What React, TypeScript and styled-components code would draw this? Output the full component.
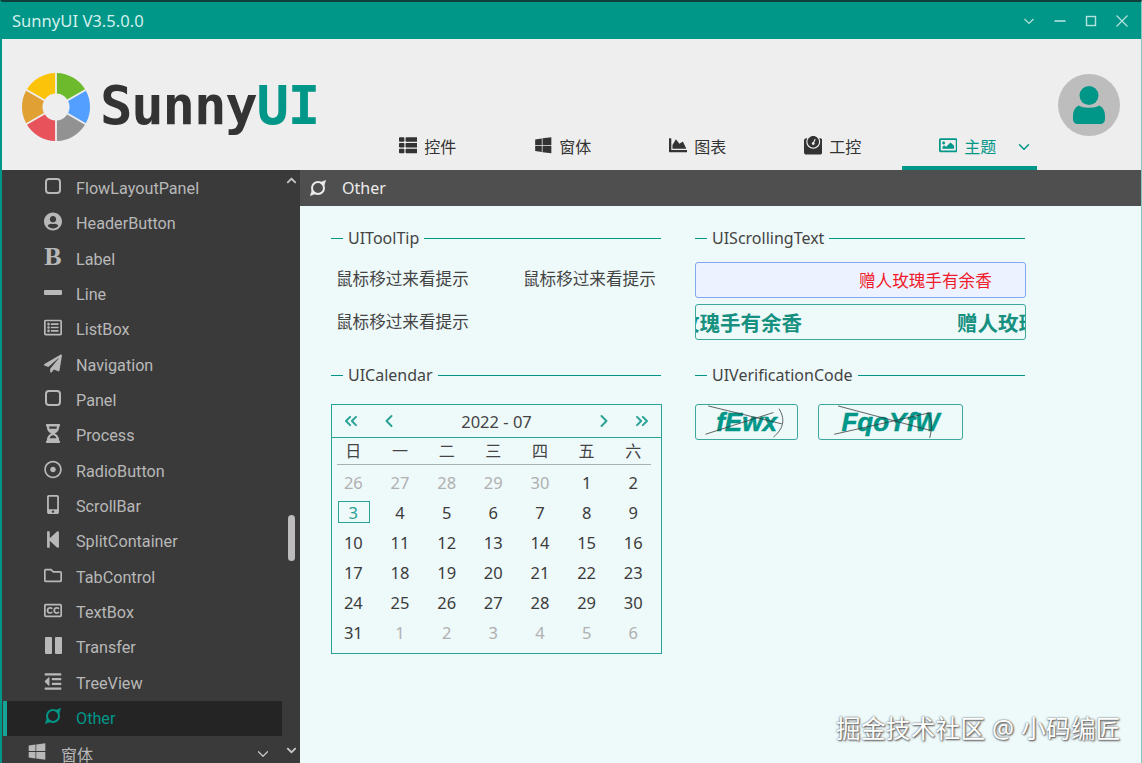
import React from 'react';
import styled, { createGlobalStyle } from 'styled-components';
import {
  FaUserCircle, FaRegListAlt, FaPaperPlane, FaHourglassHalf, FaRegDotCircle,
  FaMobileAlt, FaStepBackward, FaRegFolder, FaRegClosedCaptioning, FaOutdent, FaWindows, FaThList,
  FaChartArea, FaWeight, FaRegImage, FaChevronUp, FaChevronDown,
} from 'react-icons/fa';
import { ChevronDown, ChevronLeft, ChevronRight, ChevronsLeft, ChevronsRight } from 'lucide-react';

const TEAL = '#009688';
const SANS = `"Noto Sans", "Noto Sans CJK SC", sans-serif`;

const Global = createGlobalStyle`
  html, body { margin: 0; padding: 0; height: 100%; overflow: hidden; }
  body { font-family: ${SANS}; font-size: 16px; }
  #root { height: 100%; }
`;

const Window = styled.div`
  width: 1142px; height: 763px; box-sizing: border-box; overflow: hidden; position: relative;
  display: flex; flex-direction: column;
  border-top: 2px solid #0d3f3d; border-left: 2px solid ${TEAL}; border-right: 1px solid #7fc9c2;
  background: #eef9fa;
`;
const TitleBar = styled.div`
  height: 37px; flex: none; background: ${TEAL}; color: #d3f0ec;
  display: flex; align-items: center; padding: 0 13px 0 10px;
`;
const TitleText = styled.span` font-size: 16.6px; flex: 1; `;
const WinControls = styled.div` display: flex; align-items: center; gap: 19px; `;
const WinIcon = styled.svg` width: 12px; height: 12px; stroke: #b5e3dd; fill: none; stroke-width: 1.2; display: block; `;

const Header = styled.div`
  height: 131px; flex: none; background: #eeeeee; display: flex; position: relative;
`;
const Logo = styled.div` width: 360px; flex: none; display: flex; align-items: flex-start; padding: 33px 0 0 19px; box-sizing: border-box; gap: 9px; `;
const Wordmark = styled.div`
  font-family: "DejaVu Sans Mono", monospace; font-weight: 700; font-size: 54px; line-height: 70px;
  letter-spacing: -1.2px; color: #333; margin-top: -1px;
`;
const WordUI = styled.span` color: ${TEAL}; `;
const Tabs = styled.div` display: flex; align-items: flex-end; height: 100%; `;
const Tab = styled.div<{ $active?: boolean }>`
  width: 135px; height: 39px; box-sizing: border-box; display: flex; align-items: center; justify-content: center;
  gap: 7px; padding: 0 4px 6px 0; position: relative; font-size: 16px;
  color: ${p => (p.$active ? TEAL : '#333')};
  border-bottom: 4px solid ${p => (p.$active ? TEAL : 'transparent')};
  svg { font-size: 18.5px; }
`;
const TabChevron = styled.span`
  position: absolute; right: 4px; top: 7px; color: ${TEAL}; display: flex;
`;
const Avatar = styled.div`
  width: 62px; height: 62px; border-radius: 50%; background: #bdbdbd; display: flex; align-items: center; justify-content: center;
  margin: 35px 0 0 21px;
`;

const Main = styled.div` flex: 1; display: flex; min-height: 0; `;
const Sidebar = styled.div` width: 298px; flex: none; background: #3a3a3a; display: flex; overflow: hidden; `;
const NavList = styled.div` width: 280px; flex: none; display: flex; flex-direction: column; padding-top: 0.8px; font-family: Roboto, "Noto Sans CJK SC", sans-serif; `;
const NavRow = styled.div<{ $active?: boolean }>`
  height: 35.33px; flex: none; box-sizing: border-box; display: flex; align-items: center; gap: 14px;
  color: ${p => (p.$active ? TEAL : '#b8b8b8')};
  background: ${p => (p.$active ? '#242424' : 'transparent')};
  margin-left: ${p => (p.$active ? '1px' : '3px')};
  border-left: ${p => (p.$active ? '4px solid #14a596' : 'none')};
  padding-left: ${p => (p.$active ? '37px' : '39px')};
  font-size: 16.2px;
`;
const NavIcon = styled.span`
  width: 18px; height: 18px; display: flex; align-items: center; justify-content: center; font-size: 19px; flex: none; position: relative; top: -2px;
`;
const SquareGlyph = styled.span`
  width: 16px; height: 16px; box-sizing: border-box; border: 2px solid currentColor; border-radius: 4px; display: block;
`;
const BarGlyph = styled.span` width: 18px; height: 5px; background: currentColor; border-radius: 1px; display: block; `;
const TwinGlyph = styled.span`
  width: 17px; height: 17px; display: flex; justify-content: space-between;
  &::before, &::after { content: ''; width: 7px; background: currentColor; border-radius: 1px; }
`;
const SerifGlyph = styled.span` font-family: "Liberation Serif", serif; font-weight: 700; font-size: 26px; line-height: 18px; `;
const ParentRow = styled.div`
  height: 35.33px; flex: none; box-sizing: border-box; display: flex; align-items: center; padding-left: 26px; gap: 15px; color: #b8b8b8;
`;
const ParentChevron = styled.span` margin-left: auto; margin-right: 10px; display: flex; color: #c8c8c8; `;
const ScrollTrack = styled.div` flex: 1; display: flex; flex-direction: column; align-items: center; color: #c8c8c8; font-size: 11px; padding: 5px 0; box-sizing: border-box; `;
const ScrollThumb = styled.div` width: 7px; height: 46px; border-radius: 4px; background: #bcbcbc; margin-top: 329px; `;
const ScrollDown = styled.span` margin-top: auto; display: flex; margin-bottom: 2px; `;

const Content = styled.div` flex: 1; display: flex; flex-direction: column; min-width: 0; `;
const SubBar = styled.div`
  height: 36px; flex: none; background: #4f4f4f; color: #ececec; display: flex; align-items: center; gap: 15px; padding-left: 9px; font-size: 16px;
`;
const Panel = styled.div`
  flex: 1; display: grid; grid-template-columns: 330px 330px; column-gap: 34px; grid-template-rows: 137px 1fr;
  padding: 22px 0 0 31px; align-content: start; color: #444;
`;
const Group = styled.div` display: flex; flex-direction: column; `;
const GroupTitle = styled.div`
  display: flex; align-items: center; height: 20px; gap: 5px; font-size: 16px; color: #444; margin-bottom: 14px;
  &::before { content: ''; width: 12px; height: 1px; background: ${TEAL}; flex: none; }
  &::after { content: ''; flex: 1; height: 1px; background: ${TEAL}; }
`;
const TipGrid = styled.div`
  display: grid; grid-template-columns: 187px auto; row-gap: 19px; padding: 5px 0 0 5px; font-size: 16.6px; line-height: 24px; color: #444;
`;
const MarqueeA = styled.div`
  height: 36px; box-sizing: border-box; border: 1px solid #80a8f0; border-radius: 3px; background: #ecf2ff; color: #f01c2c;
  display: flex; align-items: center; font-size: 16.6px; padding-left: 163px; white-space: nowrap; overflow: hidden; width: 331px;
`;
const MarqueeB = styled.div`
  height: 36px; box-sizing: border-box; border: 1px solid #3aa89c; border-radius: 3px; color: #16907f; margin-top: 6px;
  display: flex; align-items: center; font-size: 20.5px; font-weight: 700; white-space: nowrap; overflow: hidden; width: 331px;
`;
const MarqueeRun = styled.span<{ $first?: boolean }>`
  flex: none; margin-left: ${p => (p.$first ? '-58px' : '155px')};
`;
const CodeRow = styled.div` display: flex; gap: 20px; margin-top: 5px; `;
const CodeBox = styled.div<{ $w: number }>`
  width: ${p => p.$w}px; height: 36px; box-sizing: border-box; border: 1px solid #3aa89c; border-radius: 3px; position: relative; overflow: hidden;
  display: flex; align-items: center; justify-content: center;
  font-family: "Liberation Sans", sans-serif; font-weight: 700; font-style: italic; font-size: 26px; color: ${TEAL};
  -webkit-text-stroke: .5px ${TEAL};
`;
const CodeNoise = styled.svg` position: absolute; inset: 0; width: 100%; height: 100%; stroke: #333; stroke-width: .8; fill: none; `;

const Calendar = styled.div`
  width: 331px; height: 250px; box-sizing: border-box; border: 1px solid #2aa396; margin-top: 5px; display: flex; flex-direction: column;
`;
const CalHead = styled.div`
  height: 32px; flex: none; border-bottom: 1px solid #2aa396; display: flex; align-items: center; position: relative; color: #2aa396;
`;
const CalTitle = styled.span` flex: 1; text-align: center; color: #444; font-size: 16.5px; `;
const CalNav = styled.span<{ $w: number }>`
  width: ${p => p.$w}px; display: flex; justify-content: center; flex: none;
`;
const WeekRow = styled.div`
  display: grid; grid-template-columns: repeat(7, 46.67px); height: 26px; margin: 0 0 0 5px; border-bottom: 1px solid #a8b0b0;
  color: #444; font-size: 16px; text-align: center; line-height: 26px; width: 314px;
`;
const WeekCell = styled.span` margin-left: -7px; width: 46.67px; display: block; `;
const DayGrid = styled.div`
  display: grid; grid-template-columns: repeat(7, 46.67px); grid-auto-rows: 30.1px; margin: 2px 0 0 -2px; font-size: 16.5px;
`;
const Day = styled.div<{ $dim?: boolean; $today?: boolean }>`
  display: flex; align-items: center; justify-content: center; position: relative;
  color: ${p => (p.$today ? '#2aa396' : p.$dim ? '#b0b0b0' : '#3c3c3c')};
  &::after {
    content: ''; display: ${p => (p.$today ? 'block' : 'none')}; position: absolute; left: 8px; top: 4px; width: 32px; height: 22px;
    box-sizing: border-box; border: 1px solid #2aa396;
  }
`;
const Watermark = styled.div`
  position: absolute; left: 834px; top: 707px; font-size: 24.6px; color: #fff; letter-spacing: .3px; white-space: nowrap;
  text-shadow: 0 0 2px #555, 1px 1px 2px #555;
`;

const seg = (a0: number, a1: number, R = 34, r = 13.5) => {
  const pt = (a: number, q: number) => `${(35 + q * Math.cos(a * Math.PI / 180)).toFixed(2)} ${(35 - q * Math.sin(a * Math.PI / 180)).toFixed(2)}`;
  return `M${pt(a0 - 1.5, R)}A${R} ${R} 0 0 1 ${pt(a1 + 1.5, R)}L${pt(a1 + 4, r)}A${r} ${r} 0 0 0 ${pt(a0 - 4, r)}Z`;
};
const WheelLogo = () => (
  <svg width="70" height="70" viewBox="0 0 70 70" style={{ flex: 'none' }}>
    <path d={seg(150, 90)} fill="#fcc30b" />
    <path d={seg(90, 30)} fill="#6dbb2d" />
    <path d={seg(30, -30)} fill="#539fff" />
    <path d={seg(-30, -90)} fill="#929292" />
    <path d={seg(-90, -150)} fill="#e8525a" />
    <path d={seg(-150, -210)} fill="#e0a033" />
  </svg>
);
const OtherGlyph = ({ size = 18 }: { size?: number }) => (
  <svg width={size} height={size} viewBox="0 0 18 18" fill="none" stroke="currentColor">
    <circle cx="9" cy="9" r="6" strokeWidth="2" />
    <path d="M11 3.6 16.6 1.4 15 6.5ZM7 14.4 1.4 16.6 3 11.5Z" fill="currentColor" strokeWidth="0.6" />
  </svg>
);

const NAV: [string, React.ReactNode][] = [
  ['FlowLayoutPanel', <SquareGlyph />], ['HeaderButton', <FaUserCircle />], ['Label', <SerifGlyph>B</SerifGlyph>], ['Line', <BarGlyph />],
  ['ListBox', <FaRegListAlt />], ['Navigation', <FaPaperPlane />], ['Panel', <SquareGlyph />], ['Process', <FaHourglassHalf />],
  ['RadioButton', <FaRegDotCircle />], ['ScrollBar', <FaMobileAlt />], ['SplitContainer', <FaStepBackward />], ['TabControl', <FaRegFolder />],
  ['TextBox', <FaRegClosedCaptioning />], ['Transfer', <TwinGlyph />], ['TreeView', <FaOutdent />],
];
const TABS: [string, React.ReactNode][] = [
  ['控件', <FaThList />], ['窗体', <FaWindows />], ['图表', <FaChartArea />], ['工控', <FaWeight />], ['主题', <FaRegImage />],
];
const DAYS: [number, boolean][] = [
  ...[26, 27, 28, 29, 30].map(d => [d, true] as [number, boolean]),
  ...Array.from({ length: 31 }, (_, i) => [i + 1, false] as [number, boolean]),
  ...[1, 2, 3, 4, 5, 6].map(d => [d, true] as [number, boolean]),
];

export default function App() {
  return (
    <>
      <Global />
      <Window>
        <TitleBar>
          <TitleText>SunnyUI V3.5.0.0</TitleText>
          <WinControls>
            <WinIcon viewBox="0 0 12 12"><path d="M1.5 4 6 8.5 10.5 4" /></WinIcon>
            <WinIcon viewBox="0 0 12 12"><path d="M0.5 6H11.5" strokeWidth="1.6" /></WinIcon>
            <WinIcon viewBox="0 0 12 12"><rect x="1.5" y="1.5" width="9" height="9" strokeWidth="1.4" /></WinIcon>
            <WinIcon viewBox="0 0 12 12"><path d="M0.5 0.5 11.5 11.5M11.5 0.5 0.5 11.5" /></WinIcon>
          </WinControls>
        </TitleBar>
        <Header>
          <Logo>
            <WheelLogo />
            <Wordmark>Sunny<WordUI>UI</WordUI></Wordmark>
          </Logo>
          <Tabs>
            {TABS.map(([label, icon], i) => (
              <Tab key={label} $active={i === 4}>
                {icon}<span>{label}</span>
                {i === 4 && <TabChevron><ChevronDown size={18} strokeWidth={2} /></TabChevron>}
              </Tab>
            ))}
          </Tabs>
          <Avatar>
            <svg width="32" height="38" viewBox="0 0 32 38" fill={TEAL}>
              <ellipse cx="16" cy="9.5" rx="9.5" ry="9.5" />
              <path d="M6 19.5C9 22.5 23 22.5 26 19.5 30 21 32 25 32 30V33C32 36 30 38 27 38H5C2 38 0 36 0 33V30C0 25 2 21 6 19.5Z" />
            </svg>
          </Avatar>
        </Header>
        <Main>
          <Sidebar>
            <NavList>
              {NAV.map(([label, icon]) => (
                <NavRow key={label}><NavIcon>{icon}</NavIcon><span>{label}</span></NavRow>
              ))}
              <NavRow $active><NavIcon><OtherGlyph /></NavIcon><span>Other</span></NavRow>
              <ParentRow><NavIcon><FaWindows /></NavIcon><span>窗体</span><ParentChevron><ChevronDown size={18} strokeWidth={1.6} /></ParentChevron></ParentRow>
            </NavList>
            <ScrollTrack>
              <FaChevronUp />
              <ScrollThumb />
              <ScrollDown><FaChevronDown /></ScrollDown>
            </ScrollTrack>
          </Sidebar>
          <Content>
            <SubBar><OtherGlyph /><span>Other</span></SubBar>
            <Panel>
              <Group>
                <GroupTitle>UIToolTip</GroupTitle>
                <TipGrid>
                  <span>鼠标移过来看提示</span><span>鼠标移过来看提示</span><span>鼠标移过来看提示</span>
                </TipGrid>
              </Group>
              <Group>
                <GroupTitle>UIScrollingText</GroupTitle>
                <MarqueeA>赠人玫瑰手有余香</MarqueeA>
                <MarqueeB><MarqueeRun $first>赠人玫瑰手有余香</MarqueeRun><MarqueeRun>赠人玫瑰手有余香</MarqueeRun></MarqueeB>
              </Group>
              <Group>
                <GroupTitle>UICalendar</GroupTitle>
                <Calendar>
                  <CalHead>
                    <CalNav $w={38}><ChevronsLeft size={20} strokeWidth={2.4} /></CalNav>
                    <CalNav $w={38}><ChevronLeft size={20} strokeWidth={2.4} /></CalNav>
                    <CalTitle>2022 - 07</CalTitle>
                    <CalNav $w={38}><ChevronRight size={20} strokeWidth={2.4} /></CalNav>
                    <CalNav $w={38}><ChevronsRight size={20} strokeWidth={2.4} /></CalNav>
                  </CalHead>
                  <WeekRow>
                    {['日', '一', '二', '三', '四', '五', '六'].map(w => <WeekCell key={w}>{w}</WeekCell>)}
                  </WeekRow>
                  <DayGrid>
                    {DAYS.map(([d, dim], i) => <Day key={i} $dim={dim} $today={i === 7}>{d}</Day>)}
                  </DayGrid>
                </Calendar>
              </Group>
              <Group>
                <GroupTitle>UIVerificationCode</GroupTitle>
                <CodeRow>
                  <CodeBox $w={103}>
                    fEwx
                    <CodeNoise viewBox="0 0 103 36"><path d="M11 1 89 20M8 31 80 8M86 4C92 14 92 24 80 34" /></CodeNoise>
                  </CodeBox>
                  <CodeBox $w={145}>
                    FqoYfW
                    <CodeNoise viewBox="0 0 145 36"><path d="M17 1 115 27M13 31 115 8M112 8C118 18 116 26 114 35" /></CodeNoise>
                  </CodeBox>
                </CodeRow>
              </Group>
            </Panel>
          </Content>
        </Main>
        <Watermark>掘金技术社区 @ 小码编匠</Watermark>
      </Window>
    </>
  );
}
